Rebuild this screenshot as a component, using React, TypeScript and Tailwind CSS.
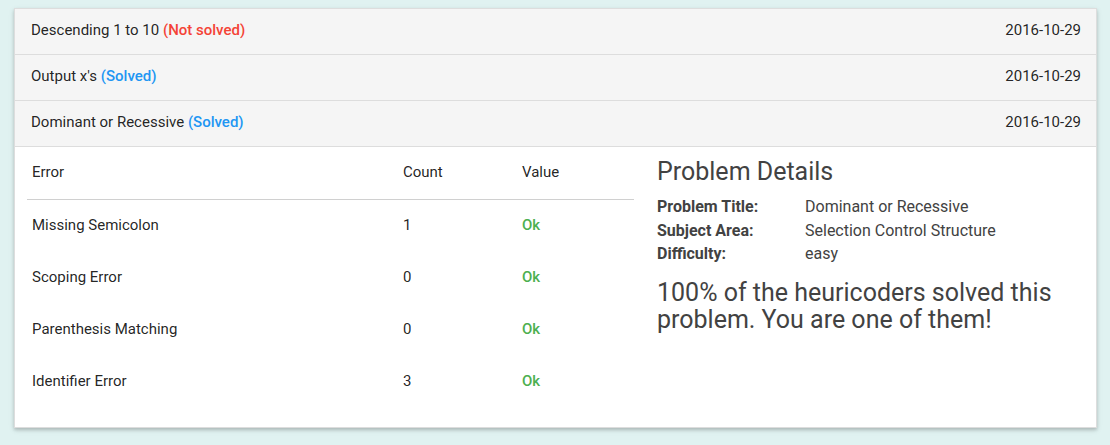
import React from "react";

const headers = [
  { title: "Descending 1 to 10", status: "(Not solved)", color: "text-[#f44336]", date: "2016-10-29" },
  { title: "Output x's", status: "(Solved)", color: "text-[#2196f3]", date: "2016-10-29" },
  { title: "Dominant or Recessive", status: "(Solved)", color: "text-[#2196f3]", date: "2016-10-29" },
];

const rows = [
  { e: "Missing Semicolon", c: "1" },
  { e: "Scoping Error", c: "0" },
  { e: "Parenthesis Matching", c: "0" },
  { e: "Identifier Error", c: "3" },
];

export default function App() {
  return (
    <div
      className="min-h-[445px] bg-[#e0f2f1] pl-[14px] pt-[8px] text-[15px] text-[rgba(0,0,0,0.87)]"
      style={{ fontFamily: "Roboto, 'Noto Sans', sans-serif" }}
    >
      <div className="w-[1083px] border border-[#ddd] bg-white shadow-[0_2px_3px_0_rgba(0,0,0,0.16),0_2px_6px_0_rgba(0,0,0,0.10)]">
        {headers.map((h, i) => (
          <div
            key={i}
            className="flex h-[46px] items-center justify-between border-b border-[#ddd] bg-[#f5f5f5] pb-[2px] pl-[16px] pr-[15px]"
          >
            <span>
              {h.title} <span className={`font-medium ${h.color}`}>{h.status}</span>
            </span>
            <span>{h.date}</span>
          </div>
        ))}
        <div className="flex pb-[20px] pl-[12px]">
          <table className="w-[607px] border-collapse text-left">
            <thead>
              <tr className="h-[52px] border-b border-[#d0d0d0]">
                <th className="w-[371px] px-[5px] pb-[2px] font-normal">Error</th>
                <th className="w-[119px] px-[5px] pb-[2px] font-normal">Count</th>
                <th className="px-[5px] pb-[2px] font-normal">Value</th>
              </tr>
            </thead>
            <tbody>
              {rows.map((r, i) => (
                <tr key={i} className="h-[52px]">
                  <td className="px-[5px]">{r.e}</td>
                  <td className="px-[5px]">{r.c}</td>
                  <td className="px-[5px] font-medium text-[#4caf50]">Ok</td>
                </tr>
              ))}
            </tbody>
          </table>
          <div className="ml-[23px] w-[420px] pt-[12px] text-[#424242]">
            <h2 className="text-[25px] leading-[26px]">Problem Details</h2>
            <div className="mt-[10px] text-[16px] leading-[23.5px]">
              <div className="flex">
                <span className="w-[148px] font-bold">Problem Title:</span>
                <span>Dominant or Recessive</span>
              </div>
              <div className="flex">
                <span className="w-[148px] font-bold">Subject Area:</span>
                <span>Selection Control Structure</span>
              </div>
              <div className="flex">
                <span className="w-[148px] font-bold">Difficulty:</span>
                <span>easy</span>
              </div>
            </div>
            <p className="mt-[13px] text-[25px] leading-[27px]">
              100% of the heuricoders solved this problem. You are one of them!
            </p>
          </div>
        </div>
      </div>
    </div>
  );
}
